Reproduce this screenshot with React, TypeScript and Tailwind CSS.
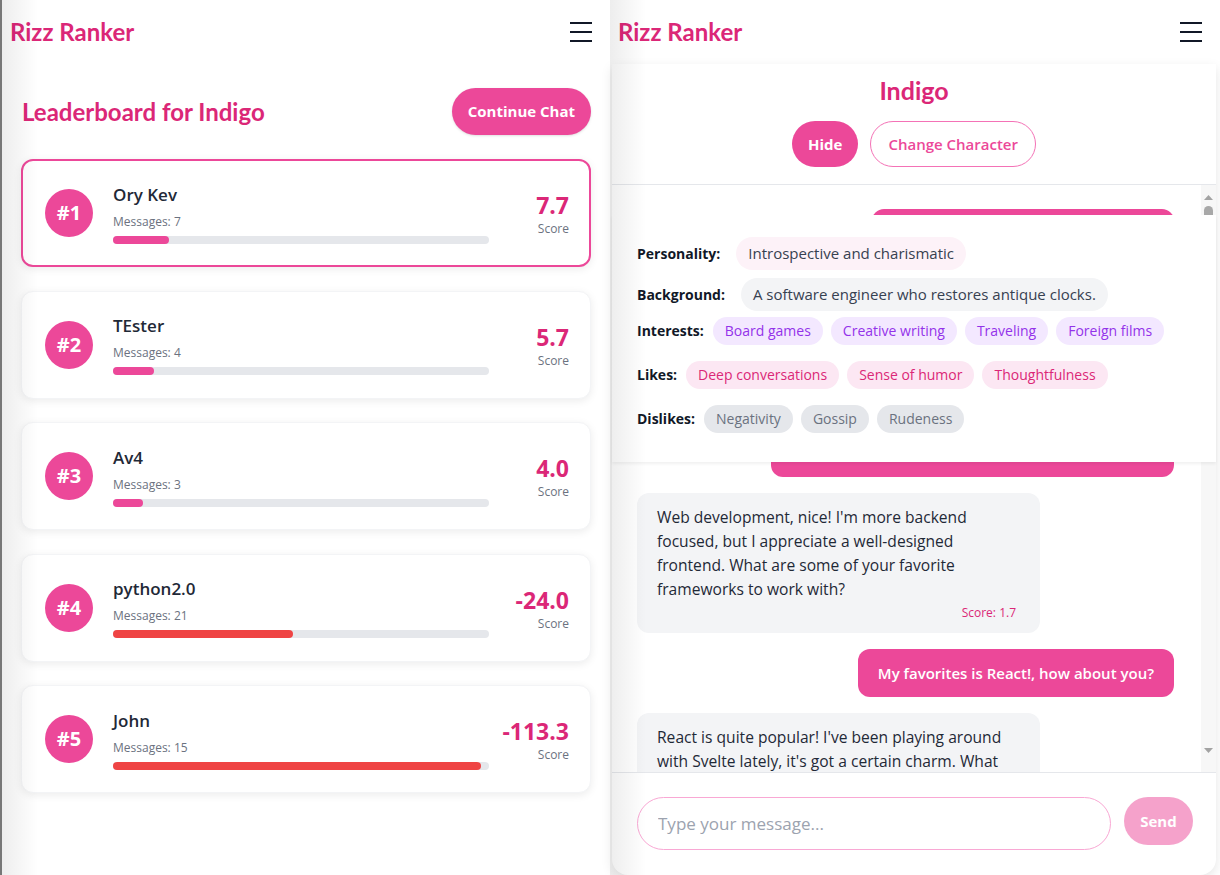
import React from "react";

type Entry = {
  rank: number;
  name: string;
  messages: number;
  score: string;
  pct: number;
  negative?: boolean;
  active?: boolean;
};

const entries: Entry[] = [
  { rank: 1, name: "Ory Kev", messages: 7, score: "7.7", pct: 15, active: true },
  { rank: 2, name: "TEster", messages: 4, score: "5.7", pct: 11 },
  { rank: 3, name: "Av4", messages: 3, score: "4.0", pct: 8 },
  { rank: 4, name: "python2.0", messages: 21, score: "-24.0", pct: 48, negative: true },
  { rank: 5, name: "John", messages: 15, score: "-113.3", pct: 98, negative: true },
];

function Hamburger() {
  return (
    <div className="flex w-[22px] flex-col gap-[7px]">
      <span className="h-[2px] w-full bg-[#111827]" />
      <span className="h-[2px] w-full bg-[#111827]" />
      <span className="h-[2px] w-full bg-[#111827]" />
    </div>
  );
}

function Header() {
  return (
    <div className="flex h-16 shrink-0 items-center justify-between pl-2 pr-[18px]">
      <span className="font-['Lato',sans-serif] text-2xl font-bold text-[#db2777]">Rizz Ranker</span>
      <Hamburger />
    </div>
  );
}

function EdgeShade() {
  return (
    <div className="pointer-events-none absolute inset-y-0 left-0 w-9 bg-linear-to-r from-black/[0.07] to-transparent" />
  );
}

function LeaderCard({ e }: { e: Entry }) {
  return (
    <div
      className={
        e.active
          ? "flex h-[108px] items-center rounded-xl border-2 border-[#ec4899] bg-white pl-[22px] pr-[20px] shadow-[0_2px_8px_rgba(0,0,0,0.08)]"
          : "flex h-[108px] items-center rounded-xl border border-[#f3f4f6] bg-white pl-[23px] pr-[21px] shadow-[0_2px_8px_rgba(0,0,0,0.08)]"
      }
    >
      <div className="flex h-12 w-12 shrink-0 items-center justify-center rounded-full bg-[#ec4899] text-xl font-bold text-white">
        #{e.rank}
      </div>
      <div className="ml-5 flex-1">
        <div className="text-[17px] font-semibold leading-6 text-[#1f2937]">{e.name}</div>
        <div className="mt-[7px] text-xs leading-4 text-[#6b7280]">Messages: {e.messages}</div>
        <div className="mt-[6px] h-2 w-full rounded-full bg-[#e5e7eb]">
          <div
            className={e.negative ? "h-2 rounded-full bg-[#ef4444]" : "h-2 rounded-full bg-[#ec4899]"}
            style={{ width: `${e.pct}%` }}
          />
        </div>
      </div>
      <div className="w-20 shrink-0 text-right">
        <div className="text-[23px] font-bold leading-8 text-[#db2777]">{e.score}</div>
        <div className="text-xs leading-4 text-[#6b7280]">Score</div>
      </div>
    </div>
  );
}

function Leaderboard() {
  return (
    <div className="relative h-[875px] w-[610px] shrink-0 border-l-2 border-[#777] bg-white">
      <Header />
      <div className="px-[19px] pt-6">
        <div className="flex h-[47px] items-center justify-between">
          <h1 className="pl-[1px] font-['Lato',sans-serif] text-2xl font-bold text-[#db2777]">
            Leaderboard for Indigo
          </h1>
          <button className="h-[47px] rounded-full bg-[#ec4899] px-4 text-[15px] font-bold text-white shadow-sm">
            Continue Chat
          </button>
        </div>
        <div className="mt-6 flex flex-col gap-[23.5px]">
          {entries.map((e) => (
            <LeaderCard key={e.rank} e={e} />
          ))}
        </div>
      </div>
      <EdgeShade />
    </div>
  );
}

function Pill({ children, className }: { children: React.ReactNode; className: string }) {
  return <span className={`rounded-full px-3 ${className}`}>{children}</span>;
}

function Traits() {
  return (
    <div className="absolute inset-x-0 top-[30px] h-[247px] bg-white px-[25px] pt-[22px] shadow-[0_2px_3px_rgba(0,0,0,0.06)]">
      <div className="flex items-center gap-4">
        <span className="text-sm font-bold text-[#111827]">Personality:</span>
        <Pill className="bg-[#fdf2f8] py-[5px] text-[15px] leading-[23px] text-[#374151]">
          Introspective and charismatic
        </Pill>
      </div>
      <div className="mt-2 flex items-center gap-4">
        <span className="text-sm font-bold text-[#111827]">Background:</span>
        <Pill className="bg-[#f3f4f6] py-[5px] text-[15px] leading-[23px] text-[#374151]">
          A software engineer who restores antique clocks.
        </Pill>
      </div>
      <div className="mt-[6px] flex items-center gap-2">
        <span className="mr-[1px] text-sm font-bold text-[#111827]">Interests:</span>
        {["Board games", "Creative writing", "Traveling", "Foreign films"].map((t) => (
          <Pill key={t} className="bg-[#f3e8ff] py-1 text-sm leading-5 text-[#9333ea]">
            {t}
          </Pill>
        ))}
      </div>
      <div className="mt-4 flex items-center gap-2">
        <span className="mr-[1px] text-sm font-bold text-[#111827]">Likes:</span>
        {["Deep conversations", "Sense of humor", "Thoughtfulness"].map((t) => (
          <Pill key={t} className="bg-[#fce7f3] py-1 text-sm leading-5 text-[#db2777]">
            {t}
          </Pill>
        ))}
      </div>
      <div className="mt-4 flex items-center gap-2">
        <span className="mr-[1px] text-sm font-bold text-[#111827]">Dislikes:</span>
        {["Negativity", "Gossip", "Rudeness"].map((t) => (
          <Pill key={t} className="bg-[#e5e7eb] py-1 text-sm leading-5 text-[#6b7280]">
            {t}
          </Pill>
        ))}
      </div>
    </div>
  );
}

function UserMsg({ text, className = "" }: { text: string; className?: string }) {
  return (
    <div
      className={`shrink-0 self-end overflow-hidden whitespace-nowrap rounded-xl bg-[#ec4899] px-5 py-3 text-[15px] font-semibold leading-6 text-white ${className}`}
    >
      {text}
    </div>
  );
}

function BotMsg({ lines, score }: { lines: string[]; score?: string }) {
  return (
    <div className="w-[403px] shrink-0 self-start rounded-xl bg-[#f3f4f6] px-5 py-3 text-[15.6px] leading-6 text-[#1f2937]">
      {lines.map((l) => (
        <span key={l} className="block whitespace-nowrap">
          {l}
        </span>
      ))}
      {score && (
        <div className="mt-1 pr-1 text-right text-xs leading-4 text-[#db2777]">Score: {score}</div>
      )}
    </div>
  );
}

function Scrollbar() {
  return (
    <div className="flex w-[15px] shrink-0 flex-col items-center bg-[#f7f7f7]">
      <svg width="15" height="17" viewBox="0 0 15 17" className="shrink-0">
        <path d="M3 15 L7.5 10 L12 15 Z" fill="#a3a3a3" />
      </svg>
      <div className="mt-[4px] h-[90px] w-[9px] shrink-0 rounded-t-full bg-[#a8a8a8]" />
      <div className="flex-1" />
      <svg width="15" height="17" viewBox="0 0 15 17" className="shrink-0">
        <path d="M3 1 L7.5 6 L12 1 Z" fill="#a3a3a3" />
      </svg>
      <div className="h-[8px] shrink-0" />
    </div>
  );
}

function Chat() {
  return (
    <div className="relative flex h-[875px] w-[610px] shrink-0 flex-col bg-white">
      <Header />
      <div className="ml-[2px] mr-[4px] flex min-h-0 flex-1 flex-col rounded-b-2xl bg-white shadow-[0_4px_12px_rgba(0,0,0,0.1)]">
        <div className="flex shrink-0 flex-col items-center border-b border-[#e5e7eb] pb-[17px] pt-[10px]">
          <h2 className="font-['Lato',sans-serif] text-[25px] font-bold leading-8 text-[#db2777]">Indigo</h2>
          <div className="mt-[15px] flex gap-3">
            <button className="h-[46px] rounded-full bg-[#ec4899] px-4 text-[15px] font-bold text-white">
              Hide
            </button>
            <button className="h-[46px] rounded-full border border-[#f472b6] bg-white px-[17px] text-[15px] font-semibold text-[#ec4899]">
              Change Character
            </button>
          </div>
        </div>
        <div className="relative flex min-h-0 flex-1">
          <div className="flex min-w-0 flex-1 flex-col gap-4 overflow-hidden pl-[25px] pr-[27px] pt-6">
            <UserMsg text="Hi Indigo! What do you do for work?" className="w-[302px]" />
            <BotMsg
              lines={[
                "I'm a software engineer, actually. Most of",
                "my days are spent writing code, and in my",
                "spare time I restore old clocks. What about",
                "you, what keeps you busy these days?",
              ]}
              score="2.0"
            />
            <UserMsg text="I'm a developer too, mostly web apps and UI!" className="w-[403px] text-center" />
            <BotMsg
              lines={[
                "Web development, nice! I'm more backend",
                "focused, but I appreciate a well-designed",
                "frontend. What are some of your favorite",
                "frameworks to work with?",
              ]}
              score="1.7"
            />
            <UserMsg text="My favorites is React!, how about you?" />
            <BotMsg
              lines={[
                "React is quite popular! I've been playing around",
                "with Svelte lately, it's got a certain charm. What",
                "do you like most about React?",
              ]}
              score="1.5"
            />
          </div>
          <Scrollbar />
          <Traits />
        </div>
        <div className="flex shrink-0 items-start gap-[13px] border-t border-[#e5e7eb] pb-[25px] pl-[25px] pr-[23px] pt-6">
          <input
            className="h-[53px] min-w-0 flex-1 rounded-full border border-[#f9a8d4] px-5 text-[17px] text-[#374151] outline-none placeholder:text-[#9ca3af]"
            placeholder="Type your message..."
          />
          <button className="h-[48px] w-[69px] rounded-full bg-[#ec4899] text-[15px] font-bold text-white opacity-50">
            Send
          </button>
        </div>
      </div>
      <EdgeShade />
    </div>
  );
}

export default function App() {
  return (
    <div className="flex h-[875px] w-[1220px] overflow-hidden bg-white font-['Open_Sans','Noto_Sans',sans-serif]">
      <Leaderboard />
      <Chat />
    </div>
  );
}
